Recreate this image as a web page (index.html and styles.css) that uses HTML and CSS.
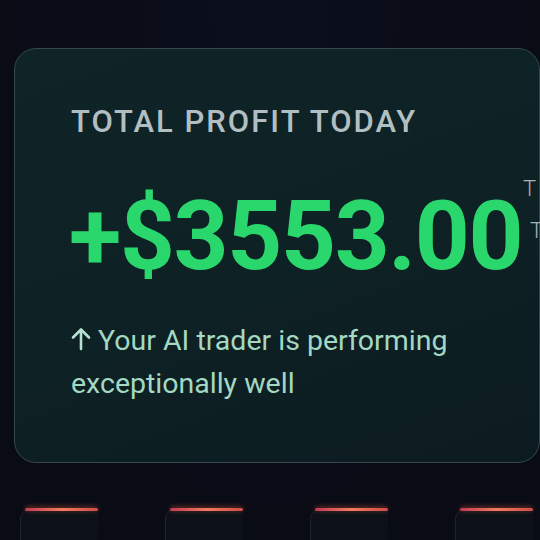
FILE: index.html
```html
<!DOCTYPE html>
<html>
<head>
<meta charset="utf-8">
<link rel="stylesheet" href="styles.css">
</head>
<body>
<main class="page">
  <section class="card">
    <h2 class="label">TOTAL PROFIT TODAY</h2>
    <div class="amount">+$3553.00</div>
    <p class="note"><svg class="arrow" viewBox="0 0 20 24" width="20" height="24"><path d="M10 22V3M2 10.5L10 2.5L18 10.5" fill="none" stroke="currentColor" stroke-width="2.6" stroke-linecap="round" stroke-linejoin="round"/></svg> Your AI trader is performing exceptionally well</p>
    <div class="peek"><span>T</span><span class="second">T</span></div>
  </section>
  <div class="tiles">
    <div class="tile"></div>
    <div class="tile"></div>
    <div class="tile"></div>
    <div class="tile"></div>
  </div>
</main>
</body>
</html>
```
FILE: styles.css
```css
html, body {
  margin: 0;
  padding: 0;
  background: #0a0c16;
  overflow: hidden;
}
.page {
  width: 540px;
  height: 540px;
  overflow: hidden;
  padding: 48px 0 0 14px;
  box-sizing: border-box;
  font-family: Roboto, "Liberation Sans", sans-serif;
  background: radial-gradient(ellipse at 50% 0%, #0b0f1c 0%, #090b15 70%);
}
.card {
  position: relative;
  width: 526px;
  height: 415px;
  box-sizing: border-box;
  border: 1.5px solid #34484d;
  border-radius: 22px;
  background: linear-gradient(160deg, #0f2427 0%, #0e2225 45%, #0c1b20 100%);
  padding: 53px 0 0 56px;
}
.label {
  margin: 0;
  font-size: 31px;
  font-weight: 500;
  letter-spacing: 2px;
  line-height: 40px;
  color: #b2bfc2;
}
.amount {
  margin-top: 44px;
  font-size: 96px;
  font-weight: 700;
  letter-spacing: -1.4px;
  line-height: 100px;
  color: #2ad76d;
  margin-left: -2px;
}
.note {
  margin: 33px 0 0 0;
  width: 420px;
  font-size: 28.5px;
  line-height: 43px;
  color: #a3d8c2;
}
.arrow {
  display: inline-block;
  vertical-align: -1px;
  color: #b4e2cf;
}
.peek {
  position: absolute;
  left: 508px;
  top: 119px;
  display: flex;
  flex-direction: column;
  font-size: 22px;
  font-weight: 300;
  line-height: 42px;
  color: #a9b3b8;
}
.peek .second {
  padding-left: 7px;
}
.tiles {
  display: flex;
  gap: 67px;
  margin-top: 45px;
  padding-left: 6px;
}
.tile {
  position: relative;
  width: 77px;
  height: 60px;
  border-radius: 12px 0 0 0;
  border-left: 1px solid #1c242c;
  background: linear-gradient(180deg, #0d1219 0%, #0b0f17 100%);
}
.tile::before {
  content: "";
  position: absolute;
  left: 4px;
  right: 0;
  top: 0;
  height: 3px;
  border-radius: 2px;
  background: linear-gradient(90deg, #c03a55 0%, #ef7c5e 50%, #d04a4a 100%);
  box-shadow: 0 -1px 5px rgba(230, 90, 60, 0.6);
}
```
